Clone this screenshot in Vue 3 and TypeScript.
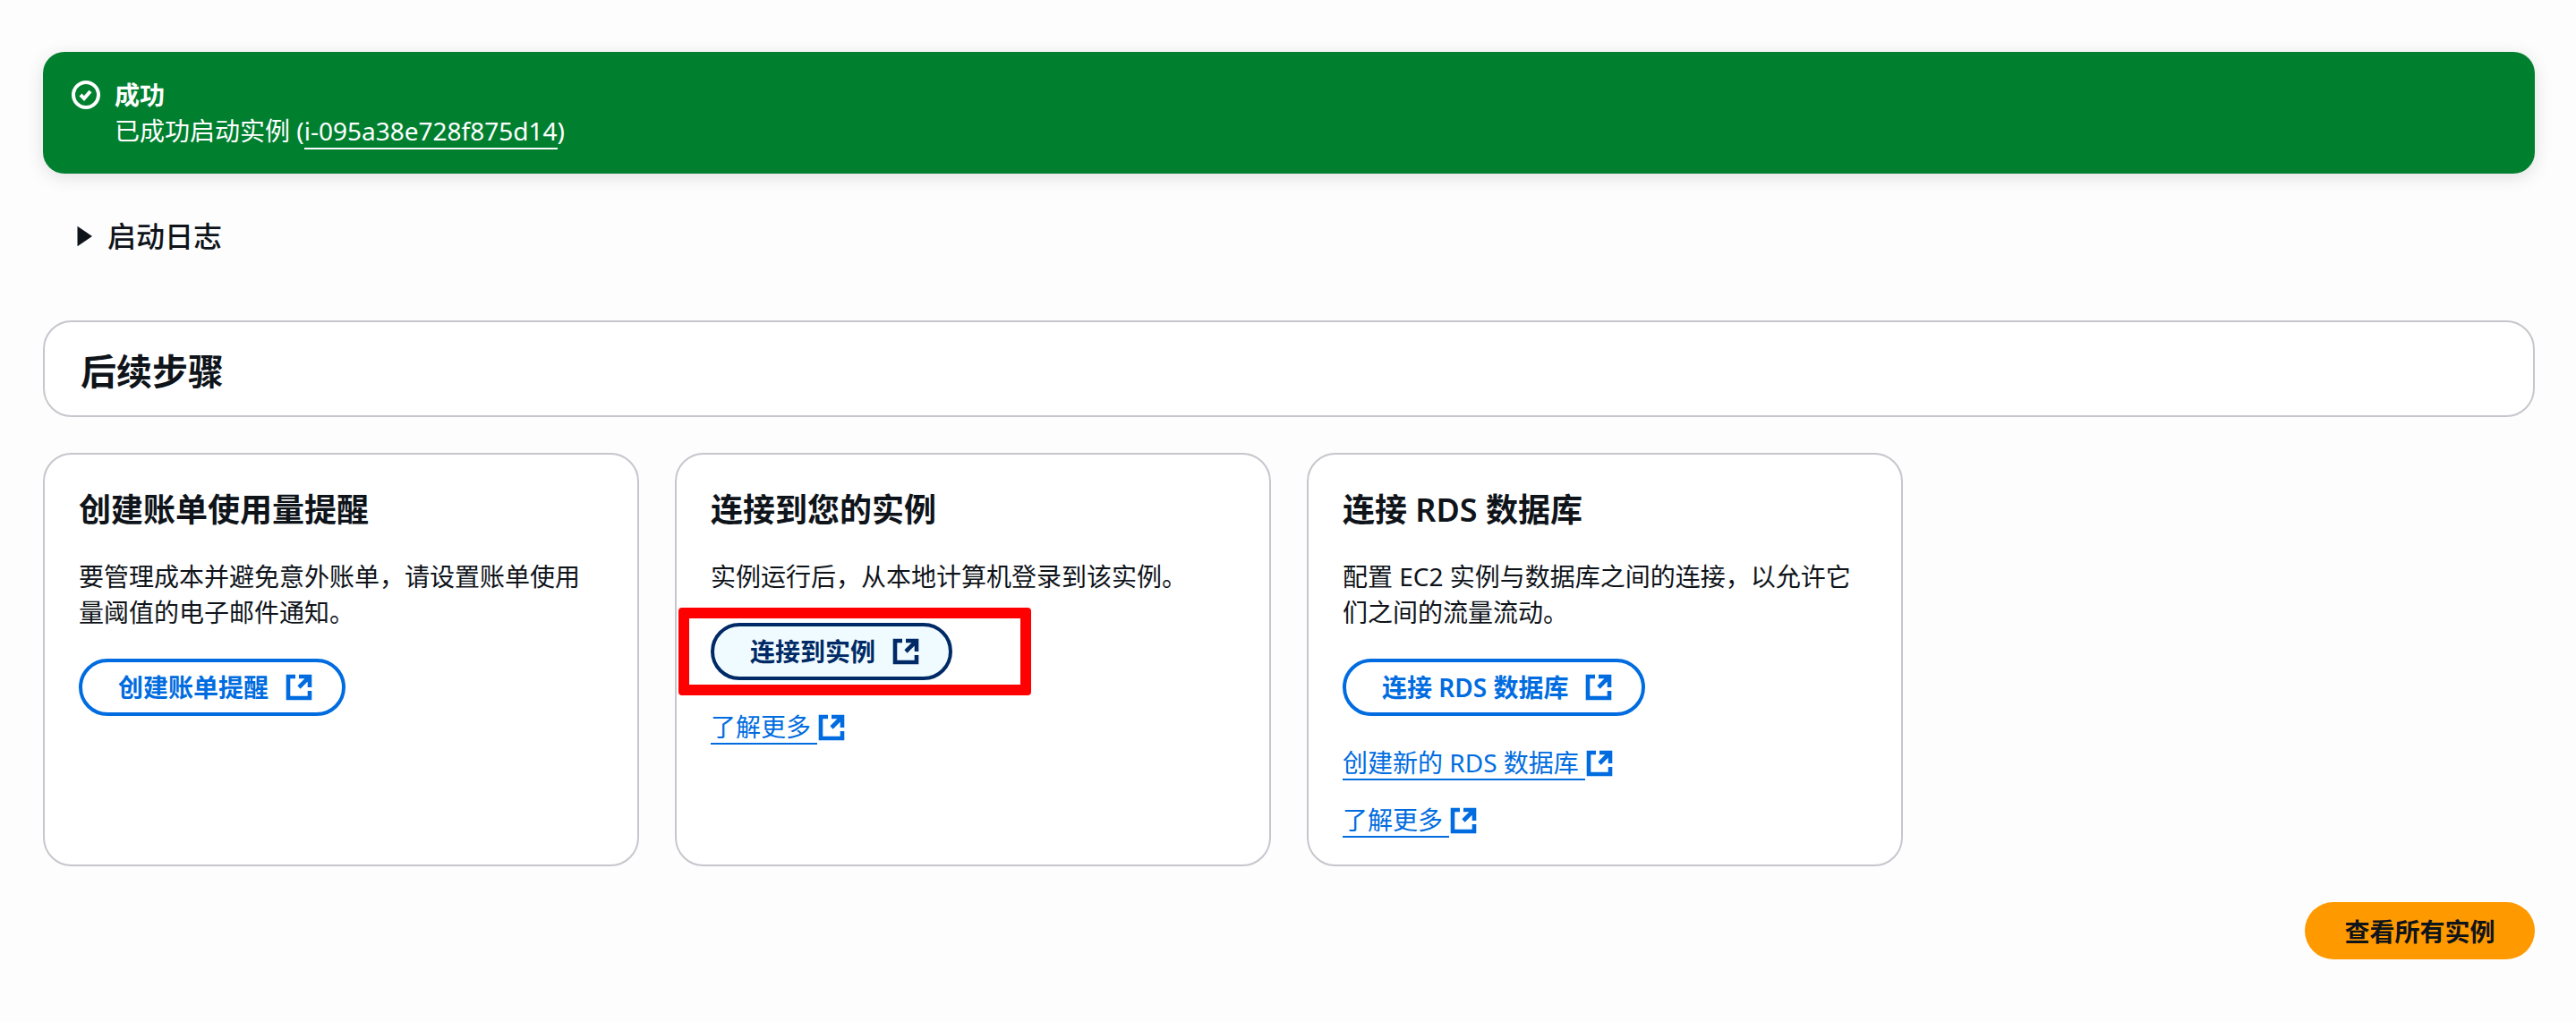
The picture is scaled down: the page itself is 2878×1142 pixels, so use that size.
<script setup lang="ts">
interface NextCard {
  title: string;
  desc: string;
  button: string;
  highlighted?: boolean;
  links: string[];
}

const cards: NextCard[] = [
  {
    title: '创建账单使用量提醒',
    desc: '要管理成本并避免意外账单，请设置账单使用量阈值的电子邮件通知。',
    button: '创建账单提醒',
    links: [],
  },
  {
    title: '连接到您的实例',
    desc: '实例运行后，从本地计算机登录到该实例。',
    button: '连接到实例',
    highlighted: true,
    links: ['了解更多'],
  },
  {
    title: '连接 RDS 数据库',
    desc: '配置 EC2 实例与数据库之间的连接，以允许它们之间的流量流动。',
    button: '连接 RDS 数据库',
    links: ['创建新的 RDS 数据库', '了解更多'],
  },
];
</script>

<template>
  <div class="page">
    <div class="flash">
      <svg class="flash-icon" viewBox="0 0 16 16" fill="none" stroke="currentColor" stroke-width="2">
        <circle cx="8" cy="8" r="7" />
        <path d="m5 8 2 2 3.5-4" />
      </svg>
      <div>
        <div class="flash-title">成功</div>
        <div>已成功启动实例 (<a class="flash-link">i-095a38e728f875d14</a>)</div>
      </div>
    </div>

    <div class="log-toggle">
      <svg class="caret" viewBox="0 0 16 16"><path d="M3 0.5l11 7.5-11 7.500z" fill="currentColor" /></svg>
      <span>启动日志</span>
    </div>

    <div class="header-box">
      <h2>后续步骤</h2>
    </div>

    <div class="cards">
      <div v-for="card in cards" :key="card.title" class="card">
        <h3>{{ card.title }}</h3>
        <p>{{ card.desc }}</p>
        <div class="btn-wrap">
          <span v-if="card.highlighted" class="red-box"></span>
          <a class="btn" :class="{ active: card.highlighted }">
            <span>{{ card.button }}</span>
            <svg class="ext" viewBox="0 0 16 16" fill="none" stroke="currentColor" stroke-width="2.3">
              <path d="M14 8V2H8M14 2 8 8M6 2H2v12h12v-4" />
            </svg>
          </a>
        </div>
        <div v-for="link in card.links" :key="link" class="link-row">
          <a class="link">{{ link }}&nbsp;</a>
          <svg class="ext" viewBox="0 0 16 16" fill="none" stroke="currentColor" stroke-width="2.3">
            <path d="M14 8V2H8M14 2 8 8M6 2H2v12h12v-4" />
          </svg>
        </div>
      </div>
    </div>

    <div class="footer">
      <button class="primary">查看所有实例</button>
    </div>
  </div>
</template>

<style scoped>
.page {
  box-sizing: border-box;
  height: 1142px;
  padding: 58px 46px 0 48px;
  font-family: "Noto Sans", "Noto Sans CJK SC", sans-serif;
  font-size: 28px;
  line-height: 40px;
  color: #0f141a;
}

.flash {
  display: flex;
  gap: 16px;
  height: 136px;
  box-sizing: border-box;
  padding: 28px 32px;
  background: #00802f;
  color: #fff;
  border-radius: 24px;
  box-shadow: 0 4px 20px rgba(0, 7, 22, 0.12);
}

.flash-icon {
  width: 32px;
  height: 32px;
  margin-top: 4px;
  flex: none;
}

.flash-title {
  font-weight: 700;
}

.flash-link {
  border-bottom: 2px solid #fff;
}

.log-toggle {
  display: flex;
  align-items: center;
  gap: 14px;
  margin: 48px 0 0 34px;
  height: 44px;
  font-size: 32px;
  font-weight: 500;
}

.caret {
  width: 24px;
  height: 24px;
}

.header-box {
  box-sizing: border-box;
  height: 108px;
  margin-top: 72px;
  padding: 6px 40px 0;
  display: flex;
  align-items: center;
  background: #fff;
  border: 2px solid #c6c6cd;
  border-radius: 32px;
}

.header-box h2 {
  margin: 0;
  font-size: 40px;
  font-weight: 600;
  line-height: 48px;
}

.cards {
  display: grid;
  grid-template-columns: repeat(4, 1fr);
  gap: 40px;
  margin-top: 40px;
}

.card {
  box-sizing: border-box;
  height: 462px;
  padding: 38px 38px 0;
  background: #fff;
  border: 2px solid #c6c6cd;
  border-radius: 32px;
}

.card h3 {
  margin: 0;
  font-size: 36px;
  font-weight: 600;
  line-height: 48px;
}

.card p {
  margin: 30px 0 0;
}

.btn-wrap {
  position: relative;
  margin-top: 32px;
  display: flex;
}

.btn {
  display: inline-flex;
  align-items: center;
  gap: 18px;
  box-sizing: border-box;
  height: 64px;
  padding: 0 32px 0 40px;
  border: 4px solid #006ce0;
  border-radius: 32px;
  color: #006ce0;
  font-weight: 600;
  position: relative;
}

.btn.active {
  background: #f0fbff;
  border-color: #002a66;
  color: #002a66;
}

.red-box {
  position: absolute;
  left: -36px;
  top: -17px;
  width: 394px;
  height: 98px;
  box-sizing: border-box;
  border: 12px solid #ff0000;
  border-radius: 4px;
}

.ext {
  width: 32px;
  height: 32px;
  flex: none;
}

.link-row {
  display: flex;
  align-items: center;
  margin-top: 26px;
  color: #006ce0;
}

.btn-wrap + .link-row {
  margin-top: 34px;
}

.link {
  border-bottom: 2px solid #006ce0;
  line-height: 36px;
}

.footer {
  display: flex;
  justify-content: flex-end;
  margin-top: 40px;
}

.primary {
  height: 64px;
  width: 257px;
  padding: 0;
  border: none;
  border-radius: 32px;
  background: #ff9900;
  color: #0f141a;
  font: 600 28px "Noto Sans", "Noto Sans CJK SC", sans-serif;
}
</style>

<style>
body {
  background: #fdfdfd;
}
</style>
